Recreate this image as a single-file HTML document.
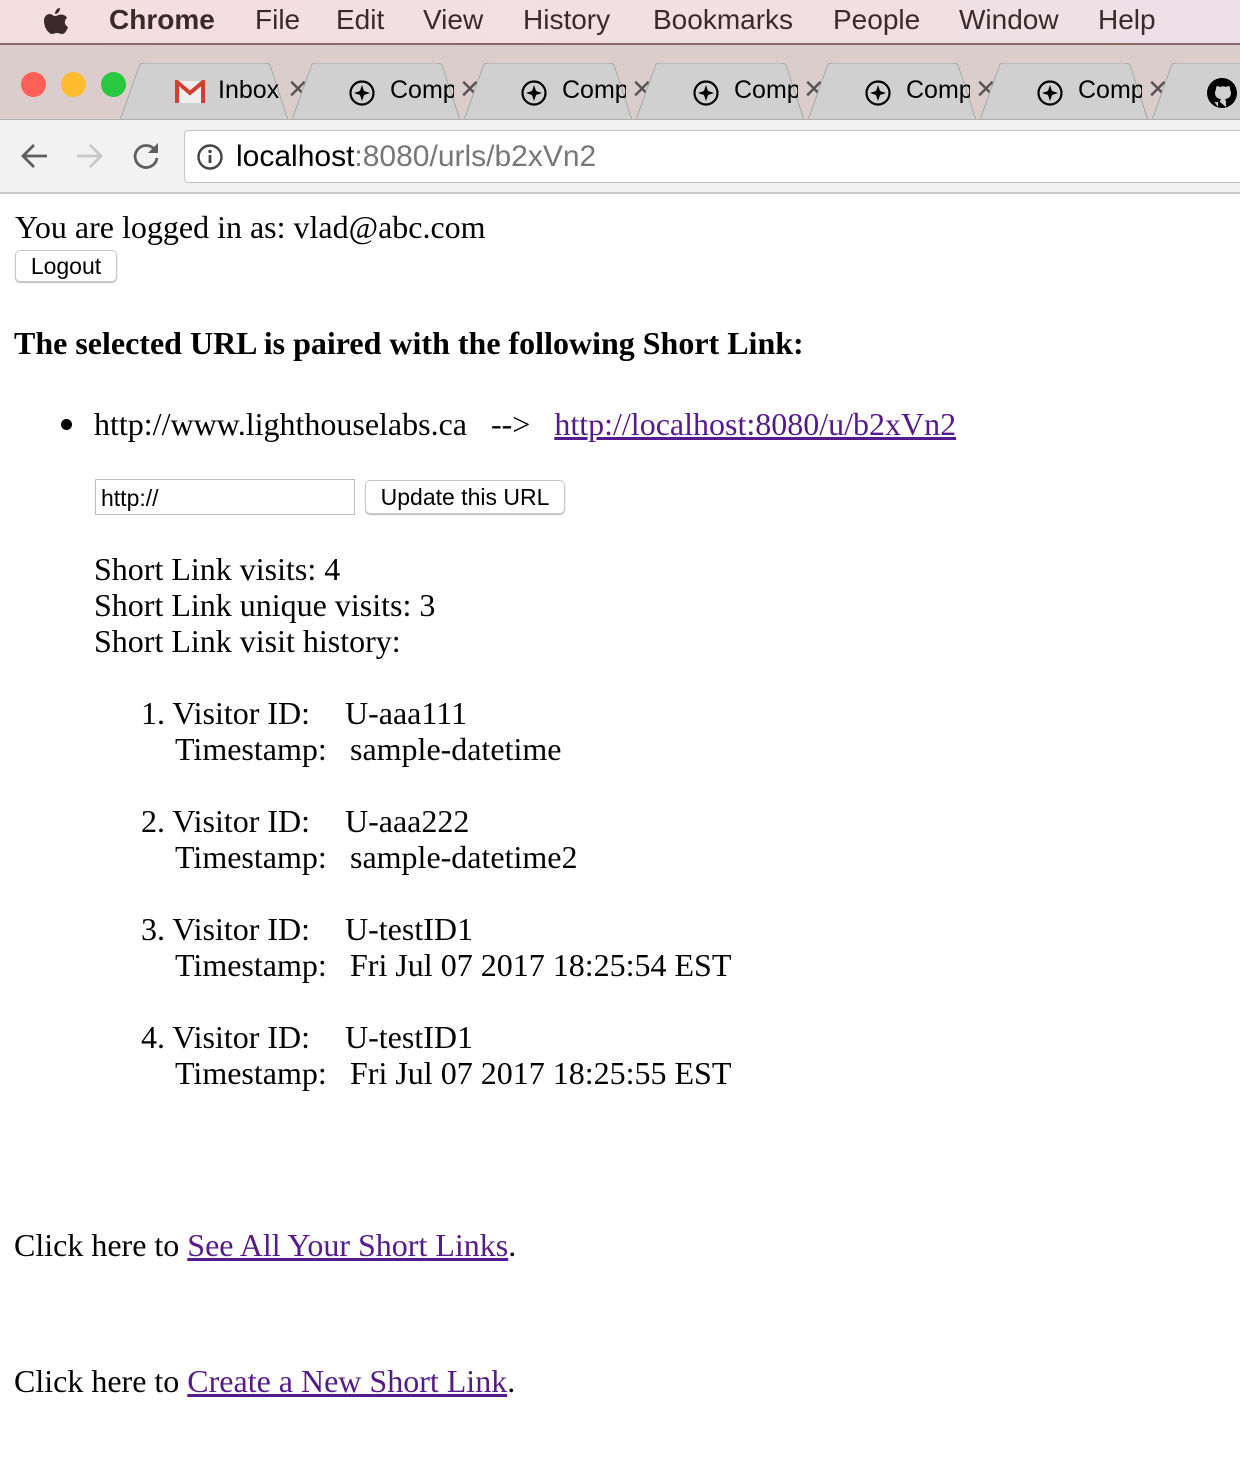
<!DOCTYPE html>
<html><head><meta charset="utf-8"><style>
*{margin:0;padding:0;box-sizing:border-box}
html,body{overflow:hidden}
body{width:1240px;height:1472px;background:#fff;position:relative;font-family:"Liberation Serif",serif;font-size:32px;color:#000}
.a{position:absolute;white-space:nowrap;line-height:36px}
.s{font-family:"Liberation Sans",sans-serif}
#menu{position:absolute;left:0;top:0;width:1240px;height:45px;background:linear-gradient(90deg,#f4dfe0,#eee0e6);border-bottom:2px solid #8a6a6a}
#menu span{position:absolute;top:4px;font-family:"Liberation Sans",sans-serif;font-size:28px;color:#3a2a2c}
#strip{position:absolute;left:0;top:45px;width:1240px;height:75px;background:#dccdcd}
.tab{position:absolute;top:63px;height:57px;width:190px;overflow:hidden}
.tab svg{position:absolute;left:0;top:0}
.tab .t{position:absolute;top:13px;font-family:"Liberation Sans",sans-serif;font-size:25px;color:#000;width:64px;overflow:hidden;white-space:nowrap}
.tab .x{position:absolute;top:7px;font-family:"Liberation Sans",sans-serif;font-size:34px;color:#555}
#tool{position:absolute;left:0;top:119px;width:1240px;height:75px;background:#f2f2f2;border-top:1px solid #b0b0b0;border-bottom:2px solid #c8c8c8}
#addr{position:absolute;left:184px;top:130px;width:1056px;height:53px;background:#fff;border:1px solid #c4c4c4;border-right:none;border-radius:4px 0 0 4px}
a{color:#551a8b;text-decoration:underline}
.btn{position:absolute;background:#fff;border:1px solid #c8c8c8;border-radius:5px;box-shadow:0 1px 1px #bbb;font-family:"Liberation Sans",sans-serif;font-size:23px;text-align:center;color:#000}
</style></head><body>
<div id="menu">
<svg style="position:absolute;left:40px;top:6px" width="30" height="32" viewBox="0 0 30 32"><path d="M20 2c0 3-2 6-5 6 0-3 2-6 5-6zM15 10c2 0 4-1.5 6-1.5 3 0 5 1.5 6 3.5-3 2-3 7 1 9-1 3-3 7-6 7-2 0-3-1-5-1s-3 1-5 1c-3 0-8-6-8-13 0-5 3-7 6-7 2 0 3 2 5 2z" fill="#3a2a2c"/></svg>
<span style="left:109px;font-weight:bold">Chrome</span>
<span style="left:255px">File</span><span style="left:336px">Edit</span><span style="left:423px">View</span><span style="left:523px">History</span><span style="left:653px">Bookmarks</span><span style="left:833px">People</span><span style="left:959px">Window</span><span style="left:1098px">Help</span>
</div>
<div id="strip"></div>
<div style="position:absolute;left:21px;top:72px;width:25px;height:25px;border-radius:50%;background:#fe5f57"></div>
<div style="position:absolute;left:61px;top:72px;width:25px;height:25px;border-radius:50%;background:#febc2e"></div>
<div style="position:absolute;left:101px;top:72px;width:25px;height:25px;border-radius:50%;background:#28c840"></div>

<div class="tab" style="left:120px"><svg width="190" height="57"><path d="M0 57 L20 1 Q22 0 26 0 L145 0 Q148 0 150 2 L168 57Z" fill="#d0d0d0" stroke="#a8a8a8"/></svg>
<svg style="position:absolute;left:55px;top:17px" width="30" height="24" viewBox="0 0 30 24"><rect x="1" y="1" width="28" height="22" fill="#eee"/><path d="M2 23V2l13 11L28 2v21" fill="none" stroke="#d23f31" stroke-width="4"/></svg>
<span class="t" style="left:98px">Inbox</span><span class="x" style="left:170px;left:168px">×</span></div>
<div class="tab" style="left:292px"><svg width="190" height="57"><path d="M0 57 L20 1 Q22 0 26 0 L145 0 Q148 0 150 2 L168 57Z" fill="#d0d0d0" stroke="#a8a8a8"/></svg><svg style="position:absolute;left:56px;top:16px" width="28" height="28"><circle cx="14" cy="14" r="11.5" fill="none" stroke="#000" stroke-width="2.2"/><path d="M14 6L16 12L22 14L16 16L14 22L12 16L6 14L12 12Z" fill="#000"/></svg><span class="t" style="left:98px">Comp</span><span class="x" style="left:168px">×</span></div>
<div class="tab" style="left:464px"><svg width="190" height="57"><path d="M0 57 L20 1 Q22 0 26 0 L145 0 Q148 0 150 2 L168 57Z" fill="#d0d0d0" stroke="#a8a8a8"/></svg><svg style="position:absolute;left:56px;top:16px" width="28" height="28"><circle cx="14" cy="14" r="11.5" fill="none" stroke="#000" stroke-width="2.2"/><path d="M14 6L16 12L22 14L16 16L14 22L12 16L6 14L12 12Z" fill="#000"/></svg><span class="t" style="left:98px">Comp</span><span class="x" style="left:168px">×</span></div>
<div class="tab" style="left:636px"><svg width="190" height="57"><path d="M0 57 L20 1 Q22 0 26 0 L145 0 Q148 0 150 2 L168 57Z" fill="#d0d0d0" stroke="#a8a8a8"/></svg><svg style="position:absolute;left:56px;top:16px" width="28" height="28"><circle cx="14" cy="14" r="11.5" fill="none" stroke="#000" stroke-width="2.2"/><path d="M14 6L16 12L22 14L16 16L14 22L12 16L6 14L12 12Z" fill="#000"/></svg><span class="t" style="left:98px">Comp</span><span class="x" style="left:168px">×</span></div>
<div class="tab" style="left:808px"><svg width="190" height="57"><path d="M0 57 L20 1 Q22 0 26 0 L145 0 Q148 0 150 2 L168 57Z" fill="#d0d0d0" stroke="#a8a8a8"/></svg><svg style="position:absolute;left:56px;top:16px" width="28" height="28"><circle cx="14" cy="14" r="11.5" fill="none" stroke="#000" stroke-width="2.2"/><path d="M14 6L16 12L22 14L16 16L14 22L12 16L6 14L12 12Z" fill="#000"/></svg><span class="t" style="left:98px">Comp</span><span class="x" style="left:168px">×</span></div>
<div class="tab" style="left:980px"><svg width="190" height="57"><path d="M0 57 L20 1 Q22 0 26 0 L145 0 Q148 0 150 2 L168 57Z" fill="#d0d0d0" stroke="#a8a8a8"/></svg><svg style="position:absolute;left:56px;top:16px" width="28" height="28"><circle cx="14" cy="14" r="11.5" fill="none" stroke="#000" stroke-width="2.2"/><path d="M14 6L16 12L22 14L16 16L14 22L12 16L6 14L12 12Z" fill="#000"/></svg><span class="t" style="left:98px">Comp</span><span class="x" style="left:168px">×</span></div>
<div class="tab" style="left:1152px;width:88px"><svg width="190" height="57"><path d="M0 57 L20 1 Q22 0 26 0 L145 0 Q148 0 150 2 L168 57Z" fill="#d0d0d0" stroke="#a8a8a8"/></svg><svg style="position:absolute;left:54px;top:14px" width="32" height="32" viewBox="0 0 32 32"><circle cx="16" cy="16" r="15" fill="#000"/><path d="M12 30v-5c-4 1-5-2-5-2M20 30v-5c0-2-1-3-1-3 3 0 6-2 6-6 0-2-1-3-1-4 0-1 0-2-1-3-1 0-3 1-3 1-2-1-4-1-6 0 0 0-2-1-3-1-1 1-1 2-1 3 0 1-1 2-1 4 0 4 3 6 6 6 0 0-1 1-1 3" fill="#d0d0d0"/></svg></div>

<div id="tool"></div>
<svg style="position:absolute;left:18px;top:141px" width="32" height="30"><path d="M29 15H5M16 4L5 15l11 11" fill="none" stroke="#5f5f5f" stroke-width="2.8"/></svg>
<svg style="position:absolute;left:74px;top:141px" width="32" height="30"><path d="M3 15h24M16 4l11 11-11 11" fill="none" stroke="#c8c8c8" stroke-width="2.8"/></svg>
<svg style="position:absolute;left:130px;top:140px" width="32" height="32"><path d="M25 10A11 11 0 1 0 27 18" fill="none" stroke="#5f5f5f" stroke-width="2.8"/><path d="M28 3v10H18z" fill="#5f5f5f"/></svg>
<div id="addr"></div>
<svg style="position:absolute;left:196px;top:143px" width="28" height="28"><circle cx="14" cy="14" r="11.5" fill="none" stroke="#444" stroke-width="2.4"/><rect x="12.6" y="12" width="2.8" height="8" fill="#444"/><circle cx="14" cy="8.5" r="1.7" fill="#444"/></svg>
<div class="a s" style="left:236px;top:139px;font-size:30px"><span style="color:#000">localhost</span><span style="color:#777">:8080/urls/b2xVn2</span></div>

<div class="a" style="left:15px;top:209px">You are logged in as: vlad@abc.com</div>
<div class="btn" style="left:15px;top:250px;width:102px;height:32px;line-height:30px">Logout</div>
<div class="a" style="left:14px;top:325px;font-weight:bold">The selected URL is paired with the following Short Link:</div>
<div style="position:absolute;left:61px;top:419px;width:11px;height:11px;border-radius:50%;background:#000"></div>
<div class="a" style="left:94px;top:406px">http://www.lighthouselabs.ca &nbsp;&nbsp;--&gt; &nbsp;&nbsp;<a>http://localhost:8080/u/b2xVn2</a></div>
<div style="position:absolute;left:95px;top:479px;width:260px;height:36px;border:1px solid #bbb;background:#fff"></div>
<div class="a s" style="left:101px;top:480px;font-size:23px">http://</div>
<div class="btn" style="left:365px;top:480px;width:200px;height:34px;line-height:33px">Update this URL</div>
<div class="a" style="left:94px;top:551px">Short Link visits: 4</div>
<div class="a" style="left:94px;top:587px">Short Link unique visits: 3</div>
<div class="a" style="left:94px;top:623px">Short Link visit history:</div>

<div class="a" style="left:141px;top:695px">1. Visitor ID: <span style="position:absolute;left:204px">U-aaa111</span></div>
<div class="a" style="left:175px;top:731px">Timestamp: <span style="position:absolute;left:175px">sample-datetime</span></div>
<div class="a" style="left:141px;top:803px">2. Visitor ID: <span style="position:absolute;left:204px">U-aaa222</span></div>
<div class="a" style="left:175px;top:839px">Timestamp: <span style="position:absolute;left:175px">sample-datetime2</span></div>
<div class="a" style="left:141px;top:911px">3. Visitor ID: <span style="position:absolute;left:204px">U-testID1</span></div>
<div class="a" style="left:175px;top:947px">Timestamp: <span style="position:absolute;left:175px">Fri Jul 07 2017 18:25:54 EST</span></div>
<div class="a" style="left:141px;top:1019px">4. Visitor ID: <span style="position:absolute;left:204px">U-testID1</span></div>
<div class="a" style="left:175px;top:1055px">Timestamp: <span style="position:absolute;left:175px">Fri Jul 07 2017 18:25:55 EST</span></div>

<div class="a" style="left:14px;top:1227px">Click here to <a>See All Your Short Links</a>.</div>
<div class="a" style="left:14px;top:1363px">Click here to <a>Create a New Short Link</a>.</div>
</body></html>
